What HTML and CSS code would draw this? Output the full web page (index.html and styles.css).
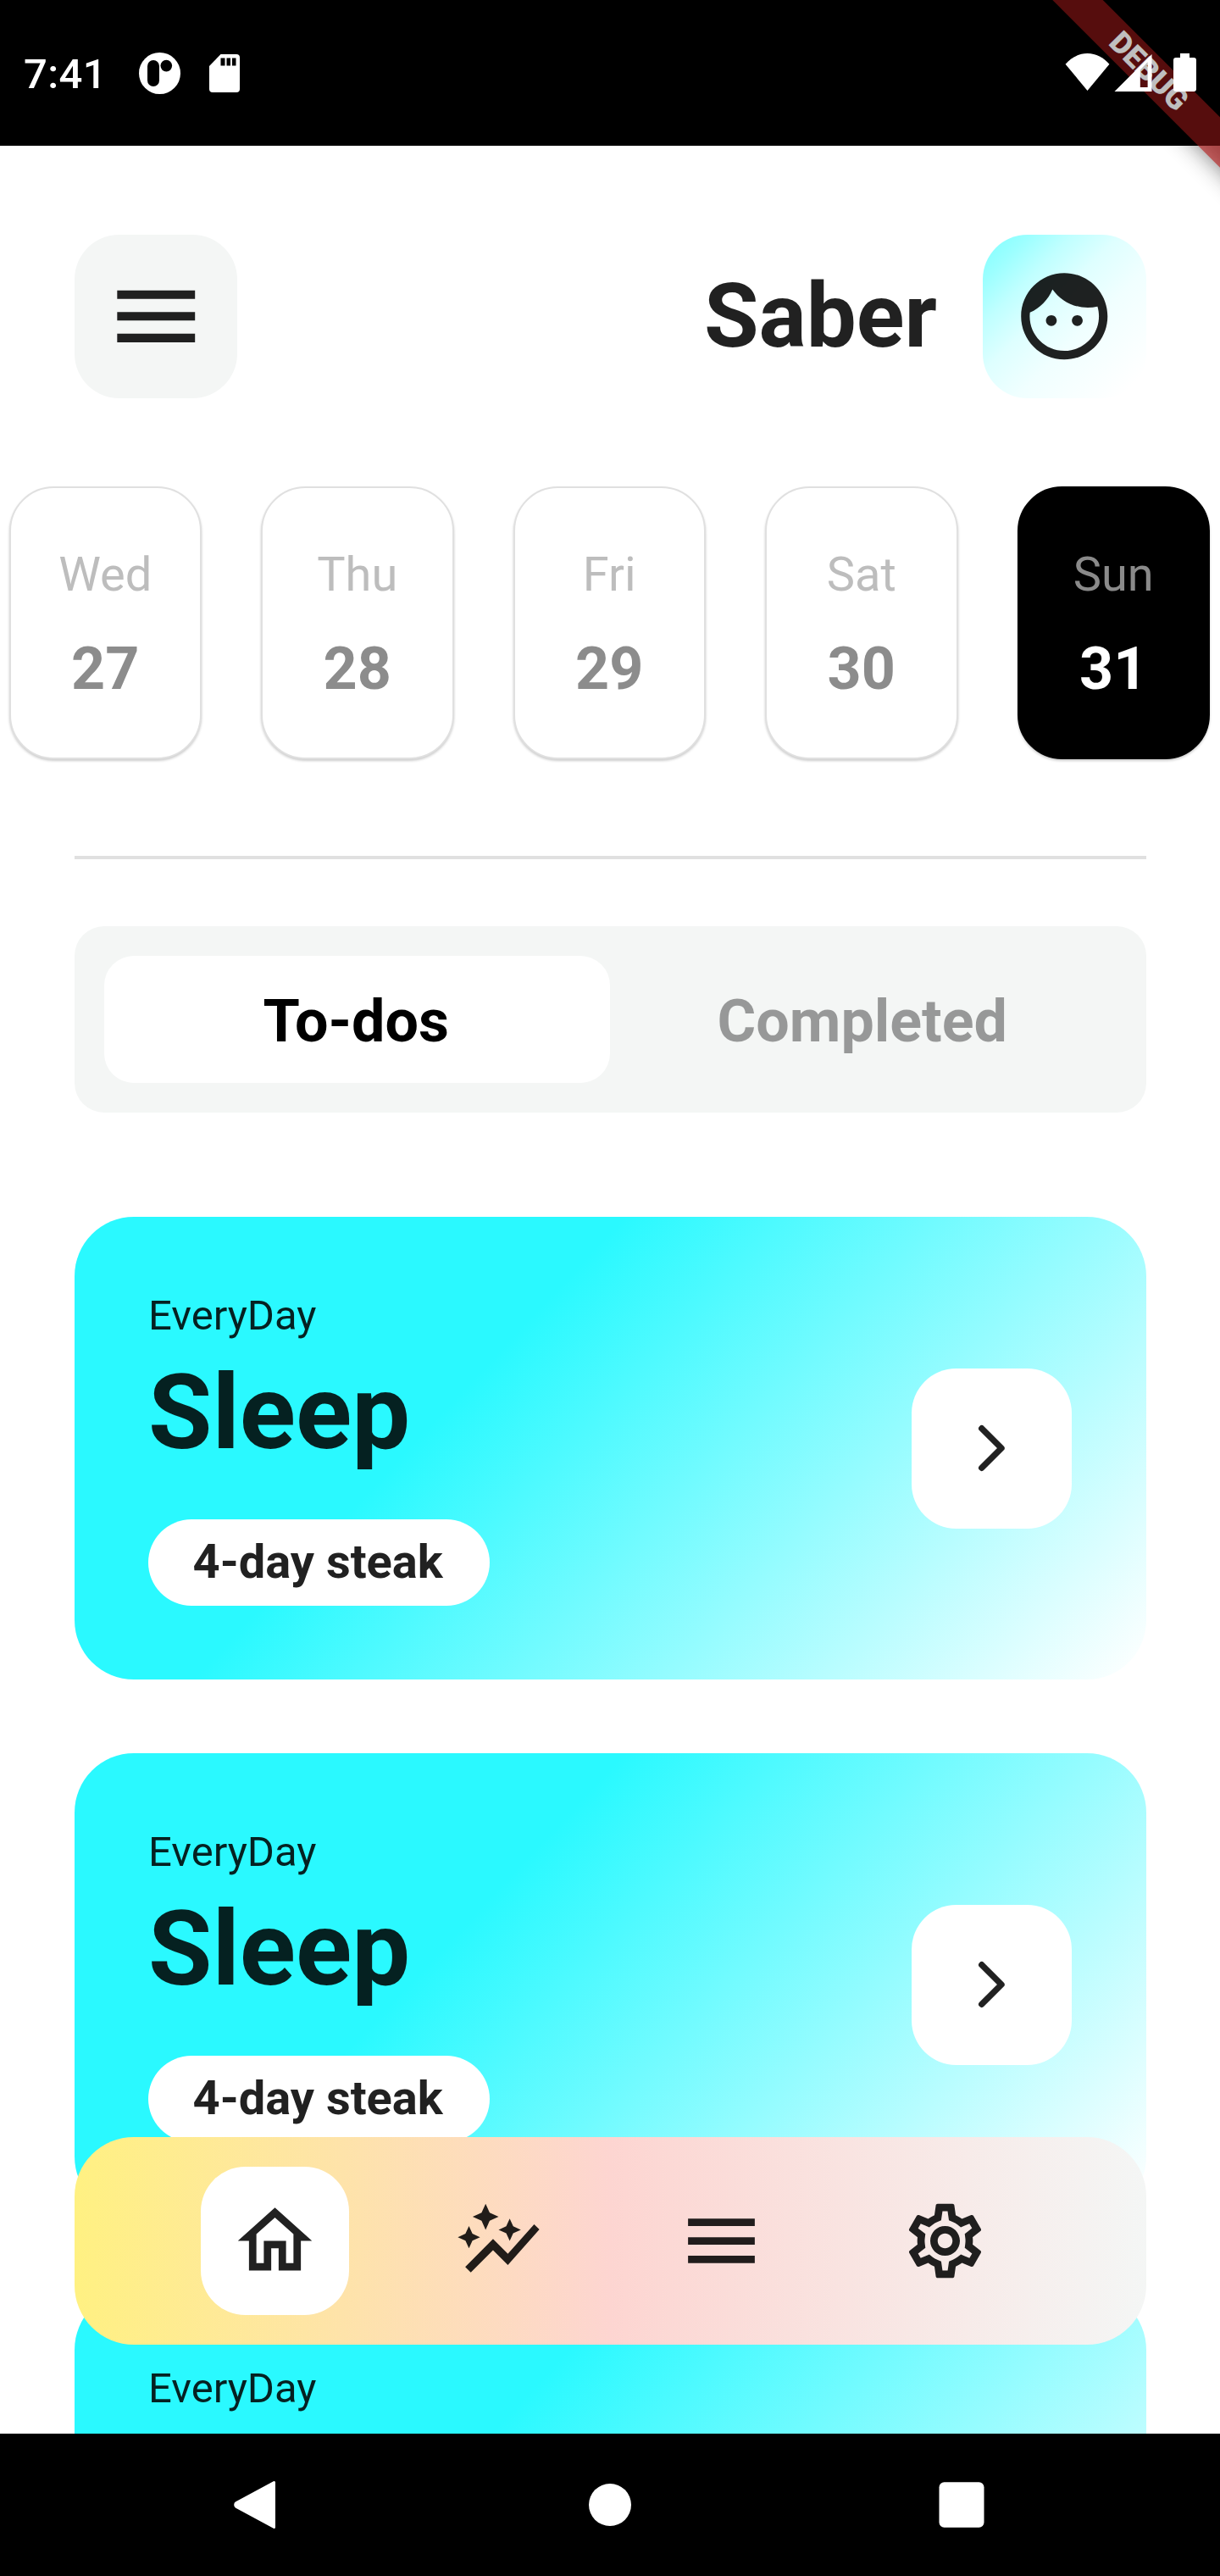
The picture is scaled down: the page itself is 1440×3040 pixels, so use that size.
FILE: index.html
```html
<!DOCTYPE html>
<html lang="en">
<head>
<meta charset="utf-8">
<title>Habits</title>
<link rel="stylesheet" href="styles.css">
</head>
<body>
<svg class="defs" width="0" height="0" aria-hidden="true">
  <symbol id="menu" viewBox="0 0 24 24"><path d="M3 18h18v-2H3v2zm0-5h18v-2H3v2zm0-7v2h18V6H3z"/></symbol>
  <symbol id="chevron" viewBox="0 0 24 24"><path d="M8.5 5.35 15.15 12 8.5 18.65" fill="none" stroke="currentColor" stroke-width="2.1" stroke-linecap="round" stroke-linejoin="round"/></symbol>
</svg>
<div class="phone">
  <header class="status">
    <span class="clock">7:41</span>
    <svg class="st-app" viewBox="0 0 49 49"><circle cx="24.5" cy="24.5" r="24.5" fill="#fff"/><rect x="10" y="9" width="14" height="31" rx="7"/><circle cx="32.3" cy="15.6" r="6.8"/></svg>
    <svg class="st-sd" viewBox="0 0 36 45"><path d="M13.5 0H32a4 4 0 0 1 4 4v37a4 4 0 0 1-4 4H4a4 4 0 0 1-4-4V14z" fill="#fff"/><path d="M13.5 4.5h5v9h-5zM20.500 4.500h4.500v9h-4.500zM27 4.500h4.500v9H27z"/></svg>
    <span class="spacer"></span>
    <svg class="st-wifi" viewBox="0 0 53 45"><path d="M0 13C7 5 16 0 26.500 0S46 5 53 13L26.500 45z"/></svg>
    <svg class="st-cell" viewBox="0 0 45 45"><path fill-rule="evenodd" d="M0 45 45 0v45zM31 19v21h9V9.500z"/></svg>
    <svg class="st-bat" viewBox="0 0 27 45"><path d="M8 0h11v5h5a3 3 0 0 1 3 3v34a3 3 0 0 1-3 3H3a3 3 0 0 1-3-3V8a3 3 0 0 1 3-3h5z"/></svg>
  </header>

  <main class="app">
    <div class="top">
      <button class="square grey"><svg class="i35"><use href="#menu"/></svg></button>
      <div class="user">
        <h1>Saber</h1>
        <div class="square avatar"><svg class="i35" viewBox="0 0 24 24"><path d="M9 11.750c-.69 0-1.250.56-1.250 1.250s.56 1.250 1.250 1.250 1.250-.56 1.250-1.250-.56-1.250-1.250-1.250zm6 0c-.69 0-1.250.56-1.250 1.250s.56 1.250 1.250 1.250 1.250-.56 1.250-1.250-.56-1.250-1.250-1.250zM12 2C6.480 2 2 6.480 2 12s4.480 10 10 10 10-4.480 10-10S17.520 2 12 2zm0 18c-4.410 0-8-3.590-8-8 0-.29.02-.58.05-.86 2.360-1.050 4.230-2.980 5.210-5.370C11.070 8.330 14.050 10 17.420 10c.78 0 1.530-.09 2.250-.26.21.71.33 1.470.33 2.260 0 4.410-3.590 8-8 8z"/></svg></div>
      </div>
    </div>

    <div class="days">
      <div class="day"><span>Wed</span><b>27</b></div>
      <div class="day"><span>Thu</span><b>28</b></div>
      <div class="day"><span>Fri</span><b>29</b></div>
      <div class="day"><span>Sat</span><b>30</b></div>
      <div class="day active"><span>Sun</span><b>31</b></div>
    </div>

    <div class="divider"></div>

    <div class="tabs">
      <div class="tab on">To-dos</div>
      <div class="tab">Completed</div>
    </div>

    <div class="cards">
      <article class="card">
        <div><p>EveryDay</p><h2>Sleep</h2><span class="pill">4-day steak</span></div>
        <button class="go"><svg class="i24"><use href="#chevron"/></svg></button>
      </article>
      <article class="card">
        <div><p>EveryDay</p><h2>Sleep</h2><span class="pill">4-day steak</span></div>
        <button class="go"><svg class="i24"><use href="#chevron"/></svg></button>
      </article>
      <article class="card">
        <div><p>EveryDay</p></div>
      </article>
    </div>

    <nav class="dock">
      <a class="item current"><svg class="i30" viewBox="0 0 24 24"><path d="M12 5.690l5 4.500V18h-2v-6H9v6H7v-7.810l5-4.500M12 3L2 12h3v8h6v-6h2v6h6v-8h3L12 3z"/></svg></a>
      <a class="item"><svg class="i30" viewBox="0 0 24 24"><path d="M14.060 9.940 12 9l2.060-.94L15 6l.94 2.060L18 9l-2.060.94L15 12l-.94-2.060zM4 14l.94-2.060L7 11l-2.060-.94L4 8l-.94 2.060L1 11l2.060.94L4 14zm4.500-5 1.090-2.410L12 5.500 9.590 4.410 8.500 2 7.410 4.410 5 5.500l2.410 1.090L8.500 9zm-4 11.500 6-6.010 4 4L23 8.930l-1.410-1.410-7.090 7.970-4-4L3 19l1.500 1.500z"/></svg></a>
      <a class="item"><svg class="i30"><use href="#menu"/></svg></a>
      <a class="item"><svg class="i30" viewBox="0 0 24 24"><path d="M19.430 12.980c.04-.32.07-.64.07-.98 0-.34-.03-.66-.07-.98l2.110-1.650c.19-.15.24-.42.12-.64l-2-3.460c-.09-.16-.26-.25-.44-.25-.06 0-.12.01-.17.03l-2.490 1c-.52-.4-1.080-.73-1.690-.98l-.38-2.650C14.460 2.180 14.250 2 14 2h-4c-.25 0-.46.18-.49.42l-.38 2.650c-.61.25-1.170.59-1.690.98l-2.490-1c-.06-.02-.12-.03-.18-.03-.17 0-.34.09-.43.25l-2 3.460c-.13.22-.07.49.12.64l2.110 1.650c-.04.32-.07.65-.07.98 0 .33.03.66.07.98l-2.110 1.650c-.19.15-.24.42-.12.64l2 3.460c.09.16.26.25.44.25.06 0 .12-.01.17-.03l2.490-1c.52.4 1.080.73 1.690.98l.38 2.650c.03.24.24.42.49.42h4c.25 0 .46-.18.49-.42l.38-2.650c.61-.25 1.170-.59 1.690-.98l2.490 1c.06.02.12.03.18.03.17 0 .34-.09.43-.25l2-3.460c.12-.22.07-.49-.12-.64l-2.110-1.650zm-1.980-1.710c.04.31.05.52.05.73 0 .21-.02.43-.05.73l-.14 1.130.89.7 1.080.84-.7 1.210-1.270-.51-1.040-.42-.9.68c-.43.32-.84.56-1.250.73l-1.060.43-.16 1.130-.2 1.350h-1.400l-.19-1.350-.16-1.130-1.060-.43c-.43-.18-.83-.41-1.230-.71l-.91-.7-1.060.43-1.270.51-.7-1.210 1.080-.84.89-.7-.14-1.130c-.03-.31-.05-.54-.05-.74s.02-.43.05-.73l.14-1.130-.89-.7-1.080-.84.7-1.210 1.270.51 1.040.42.9-.68c.43-.32.84-.56 1.250-.73l1.060-.43.16-1.130.2-1.350h1.390l.19 1.350.16 1.130 1.060.43c.43.18.83.41 1.230.71l.91.7 1.060-.43 1.270-.51.7 1.210-1.070.85-.89.7.14 1.130zM12 8c-2.210 0-4 1.790-4 4s1.790 4 4 4 4-1.790 4-4-1.790-4-4-4zm0 6c-1.100 0-2-.9-2-2s.9-2 2-2 2 .9 2 2-.9 2-2 2z"/></svg></a>
    </nav>
  </main>

  <footer class="sysnav">
    <svg viewBox="0 0 58 58"><path d="M46.500 2.500v53L2 31.500a3 3 0 0 1 0-5z" stroke="#fff" stroke-width="3" stroke-linejoin="round"/></svg>
    <svg viewBox="0 0 58 58"><circle cx="29" cy="29" r="25"/></svg>
    <svg viewBox="0 0 58 58"><rect x="2.500" y="2.300" width="53" height="53.400" rx="6"/></svg>
  </footer>

  <div class="banner"><div class="ribbon-shadow"></div><div class="ribbon">DEBUG</div></div>
  <div class="status-scrim"></div>
</div>
</body>
</html>
```
FILE: styles.css
```css
* { box-sizing: border-box; margin: 0; padding: 0; }
body { background: #fff; font-family: Roboto, "Liberation Sans", sans-serif; color: rgba(0, 0, 0, .87); }
button { border: 0; font: inherit; color: inherit; background: none; }
svg { display: block; fill: currentColor; flex: none; }
.defs { position: absolute; }
.i24 { width: 84px; height: 84px; }
.i30 { width: 105px; height: 105px; }
.i35 { width: 122.5px; height: 122.5px; }

.phone { position: relative; width: 1440px; height: 3040px; display: flex; flex-direction: column; overflow: hidden; }

/* system status bar */
.status { height: 172px; background: #000; display: flex; align-items: flex-start; padding: 0 28px; }
.status svg { position: relative; z-index: 3; fill: #fff; }
.clock { position: relative; z-index: 3; color: #fff; font-size: 49px; line-height: 58px; font-weight: 500; letter-spacing: .4px; margin-top: 59px; width: 136px; }
.spacer { flex: 1; }
.status .st-app { width: 49px; height: 49px; margin-top: 62px; fill: #000; }
.status .st-sd { width: 36px; height: 45px; margin: 64px 0 0 34px; fill: #000; }
.st-wifi { width: 53px; height: 44px; margin-top: 63px; }
.st-cell { width: 45px; height: 44px; margin: 64px 25px 0 5px; }
.st-bat { width: 27px; height: 45px; margin-top: 63px; }

/* app body */
.app { position: relative; height: 2700px; overflow: hidden; background: #fff; padding-top: 105px; }
.top { display: flex; justify-content: space-between; padding: 0 87.5px; }
.square { width: 192.5px; height: 192.5px; border-radius: 52.5px; display: flex; align-items: center; justify-content: center; }
.grey { background: #f4f6f5; }
.avatar { background: linear-gradient(135deg, #7effff 0%, #9bffff 14%, #bfffff 27%, #deffff 42%, #f0ffff 60%, #fff 92%); }
.user { display: flex; align-items: center; gap: 54px; }
h1 { font-size: 105px; line-height: 123px; font-weight: 700; }

.days { display: flex; justify-content: center; gap: 70px; margin-top: 104.5px; padding-right: 1.5px; }
.day { width: 227.5px; height: 322px; border-radius: 52.5px; border: 2px solid #e0e0e0; background: #fff; box-shadow: 0 2px 3px rgba(0, 0, 0, .2); padding-top: 69px; display: flex; flex-direction: column; align-items: center; }
.day span { font-size: 56px; line-height: 66.5px; color: #bdbdbd; }
.day b { font-size: 70px; line-height: 82px; margin-top: 36.5px; font-weight: 700; color: #8c8c8c; }
.day.active { background: #000; border-color: #000; }
.day.active span { color: #8a8a8a; }
.day.active b { color: #fff; }

.divider { height: 4px; margin: 114px 87.5px 0; background: #e0e0e0; }

.tabs { display: flex; margin: 78.5px 87.5px 0; padding: 35px; height: 220.5px; border-radius: 35px; background: #f4f6f5; }
.tab { flex: 1; display: flex; align-items: center; justify-content: center; border-radius: 35px; font-size: 70px; font-weight: 700; padding: 4px 2px 0 0; color: rgba(0, 0, 0, .38); }
.tab.on { background: #fff; color: #000; }

.cards { display: flex; flex-direction: column; gap: 87.3px; margin: 123px 87.5px 0; }
.card { height: 546px; flex: none; padding: 87.5px; border-radius: 70px; display: flex; justify-content: space-between; align-items: center; background: linear-gradient(133deg, #2af9ff 36.6%, #fff 99.5%); }
.card > div { height: 371px; }
.card p { font-size: 49px; line-height: 57.5px; }
.card h2 { font-size: 122.5px; line-height: 143.5px; font-weight: 700; margin: 14.5px 0 54px; }
.pill { display: inline-block; min-width: 402.5px; height: 101.5px; padding: 0 52.5px; border-radius: 51px; background: #fff; color: #212121; font-size: 56px; line-height: 101.5px; font-weight: 700; }
.go { width: 189px; height: 189px; border-radius: 52.5px; background: #fff; display: flex; align-items: center; justify-content: center; }

/* floating navigation */
.dock { position: absolute; left: 87.5px; right: 87.5px; bottom: 105px; height: 245px; border-radius: 70px; padding: 0 105px; display: flex; align-items: center; justify-content: space-around; background: linear-gradient(90deg, #fff182, #fdd5d1 50%, #f4f6f5); }
.item { width: 175px; height: 175px; border-radius: 52.5px; display: flex; align-items: center; justify-content: center; }
.item.current { background: #fff; }

/* system navigation */
.sysnav { height: 168px; background: #000; color: #fff; display: flex; justify-content: space-between; align-items: center; padding: 0 276.5px; }
.sysnav svg { width: 58px; height: 58px; overflow: visible; }

/* corner ribbon; the status bar scrim dims its upper part */
.banner { position: absolute; top: 0; right: 0; width: 300px; height: 300px; overflow: hidden; z-index: 1; }
.ribbon, .ribbon-shadow { position: absolute; left: 16px; top: 63px; width: 400px; height: 42px; transform: rotate(45deg); }
.ribbon { background: rgba(183, 28, 28, .627); color: #fff; font-size: 35.7px; line-height: 42px; font-weight: 900; text-align: center; }
.ribbon-shadow { background: rgba(0, 0, 0, .5); filter: blur(14px); }
.status-scrim { position: absolute; top: 0; left: 0; right: 0; height: 172px; background: rgba(0, 0, 0, .25); z-index: 2; }
```
